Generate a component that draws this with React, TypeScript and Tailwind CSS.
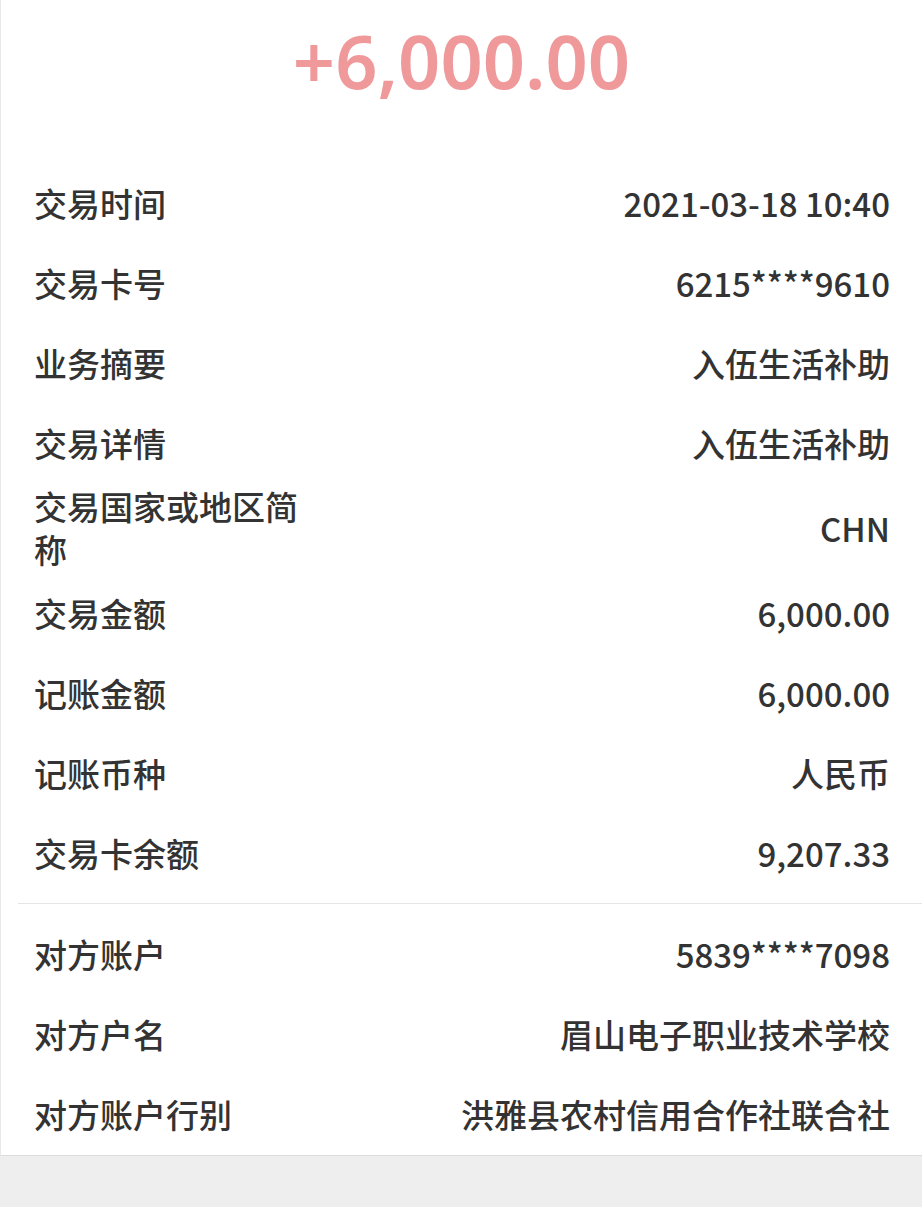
import React from "react";

const rows1: [string, string][] = [
  ["交易时间", "2021-03-18 10:40"],
  ["交易卡号", "6215****9610"],
  ["业务摘要", "入伍生活补助"],
  ["交易详情", "入伍生活补助"],
  ["交易国家或地区简称", "CHN"],
  ["交易金额", "6,000.00"],
  ["记账金额", "6,000.00"],
  ["记账币种", "人民币"],
  ["交易卡余额", "9,207.33"],
];

const rows2: [string, string][] = [
  ["对方账户", "5839****7098"],
  ["对方户名", "眉山电子职业技术学校"],
  ["对方账户行别", "洪雅县农村信用合作社联合社"],
];

function Row({ label, value }: { label: string; value: string }) {
  return (
    <div className="flex min-h-[80px] items-center justify-between py-[2px] leading-[43px]">
      <div className="w-[272px] shrink-0">{label}</div>
      <div className="text-right">{value}</div>
    </div>
  );
}

export default function App() {
  return (
    <div
      className="w-[922px] h-[1207px] bg-[#eeeeee] text-[#333333] text-[33px] font-medium"
      style={{ fontFamily: '"Noto Sans CJK SC", sans-serif' }}
    >
      <div className="bg-white border-l border-[#e8e8e8] border-b border-b-[#dcdcdc]">
        <div className="h-[163px] flex justify-center pt-[16px]">
          <div
            className="text-[74px] leading-[90px] font-semibold text-[#ef999b]"
            style={{ fontFamily: '"Noto Sans", sans-serif' }}
          >
            +6,000.00
          </div>
        </div>
        <div className="pl-[33px] pr-[32px]">
          {rows1.map(([l, v]) => (
            <Row key={l} label={l} value={v} />
          ))}
        </div>
        <div className="ml-[17px] my-[10px] h-px bg-[#e6e6e6]" />
        <div className="pl-[33px] pr-[32px] pb-[1px]">
          {rows2.map(([l, v]) => (
            <Row key={l} label={l} value={v} />
          ))}
        </div>
      </div>
    </div>
  );
}
